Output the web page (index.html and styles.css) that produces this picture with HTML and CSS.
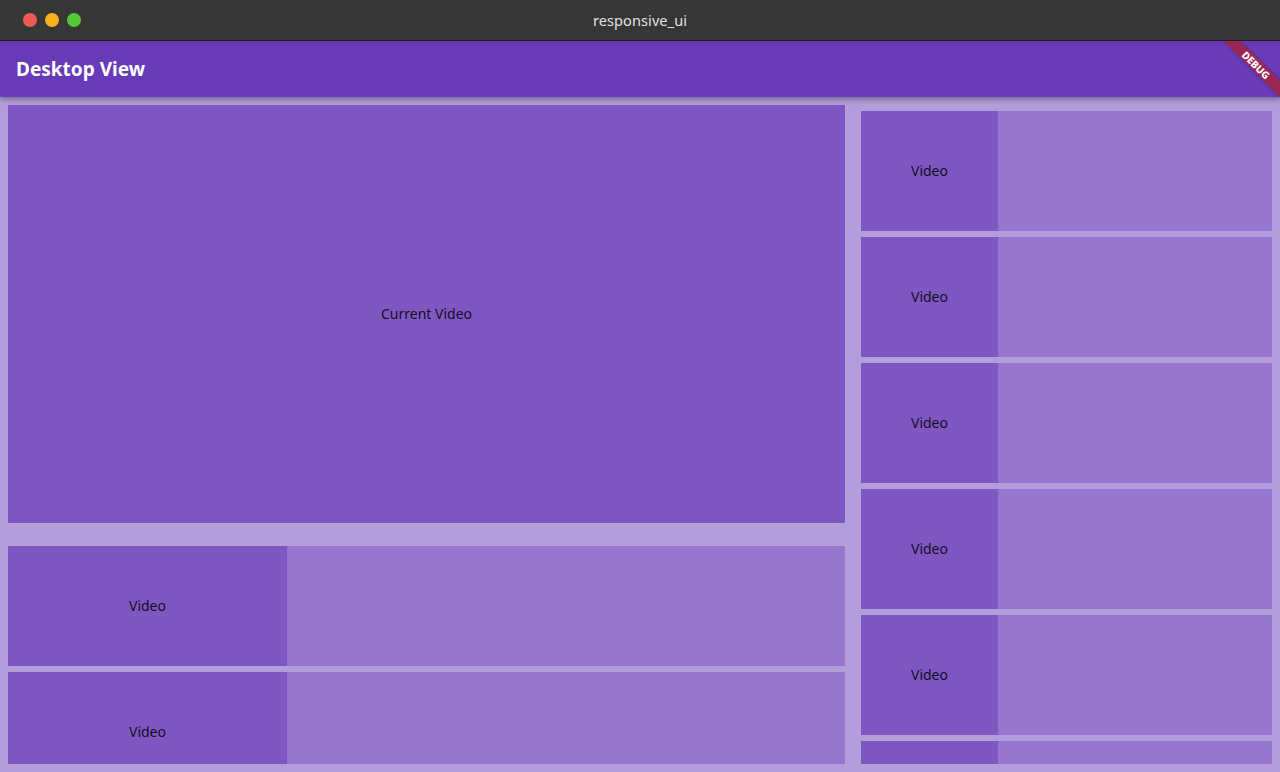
FILE: index.html
```html
<!DOCTYPE html>
<html>
<head>
<meta charset="utf-8">
<link rel="stylesheet" href="styles.css">
</head>
<body>
<div class="window">
  <div class="titlebar">
    <div class="lights">
      <span class="light red"></span>
      <span class="light yellow"></span>
      <span class="light green"></span>
    </div>
    <div class="wintitle">responsive_ui</div>
  </div>
  <div class="app">
    <div class="appbar">Desktop View</div>
    <div class="content">
      <div class="leftcol">
        <div class="current">Current Video</div>
        <div class="list leftlist">
          <div class="row"><div class="thumb">Video</div><div class="info"></div></div>
          <div class="row"><div class="thumb">Video</div><div class="info"></div></div>
        </div>
      </div>
      <div class="list rightlist">
        <div class="row"><div class="thumb">Video</div><div class="info"></div></div>
        <div class="row"><div class="thumb">Video</div><div class="info"></div></div>
        <div class="row"><div class="thumb">Video</div><div class="info"></div></div>
        <div class="row"><div class="thumb">Video</div><div class="info"></div></div>
        <div class="row"><div class="thumb">Video</div><div class="info"></div></div>
        <div class="row"><div class="thumb">Video</div><div class="info"></div></div>
      </div>
    </div>
    <div class="banner"><span>DEBUG</span></div>
  </div>
</div>
</body>
</html>
```

FILE: styles.css
```css
html, body {
  margin: 0;
  padding: 0;
}
body {
  width: 1280px;
  height: 772px;
  overflow: hidden;
  font-family: "Noto Sans", "Open Sans", sans-serif;
}
.window {
  display: flex;
  flex-direction: column;
  height: 772px;
}
.titlebar {
  height: 40px;
  background: #363636;
  border-bottom: 1px solid #1c1c1c;
  display: flex;
  align-items: center;
  justify-content: center;
  position: relative;
  flex: none;
}
.lights {
  position: absolute;
  left: 23px;
  top: 13px;
  display: flex;
  gap: 8px;
}
.light {
  width: 14px;
  height: 14px;
  border-radius: 50%;
  display: block;
}
.red { background: #ec5a53; }
.yellow { background: #f3b41d; }
.green { background: #57c638; }
.wintitle {
  color: #e2e2e2;
  font-size: 14.5px;
  letter-spacing: 0.1px;
}
.app {
  flex: 1;
  display: flex;
  flex-direction: column;
  background: #b39ddb;
  position: relative;
  overflow: hidden;
}
.appbar {
  height: 56px;
  flex: none;
  background: #673ab7;
  color: #fff;
  font-weight: 700;
  font-size: 19px;
  display: flex;
  align-items: center;
  padding-left: 16px;
  box-shadow: 0 2px 4px rgba(0,0,0,0.2), 0 4px 5px rgba(0,0,0,0.12);
  position: relative;
  z-index: 1;
}
.content {
  flex: 1;
  display: grid;
  grid-template-columns: 837px 411px;
  column-gap: 16px;
  padding: 8px 8px;
  min-height: 0;
  overflow: hidden;
}
.leftcol {
  display: flex;
  flex-direction: column;
  overflow: hidden;
  min-height: 0;
}
.current {
  height: 416px;
  padding-bottom: 2px;
  flex: none;
  background: #7e57c2;
  display: flex;
  align-items: center;
  justify-content: center;
  font-size: 14px;
  color: rgba(0,0,0,0.87);
}
.list {
  display: flex;
  flex-direction: column;
  gap: 6px;
  overflow: hidden;
  min-height: 0;
}
.leftlist {
  margin-top: 23px;
  flex: 1;
}
.rightlist {
  padding-top: 6px;
}
.row {
  height: 120px;
  flex: none;
  display: flex;
}
.thumb {
  width: 33.333%;
  background: #7e57c2;
  display: flex;
  align-items: center;
  justify-content: center;
  padding-bottom: 2px;
  font-size: 14px;
  color: rgba(0,0,0,0.87);
}
.info {
  flex: 1;
  background: #9575cd;
}
.banner {
  position: absolute;
  width: 110px;
  height: 12px;
  right: -30.75px;
  top: 18.25px;
  transform: rotate(45deg);
  background: rgba(183, 28, 28, 0.63);
  color: #fff;
  font-size: 10px;
  font-weight: 800;
  line-height: 12px;
  text-align: center;
  z-index: 2;
  box-shadow: 0 0 2px rgba(0,0,0,0.3);
}
```
